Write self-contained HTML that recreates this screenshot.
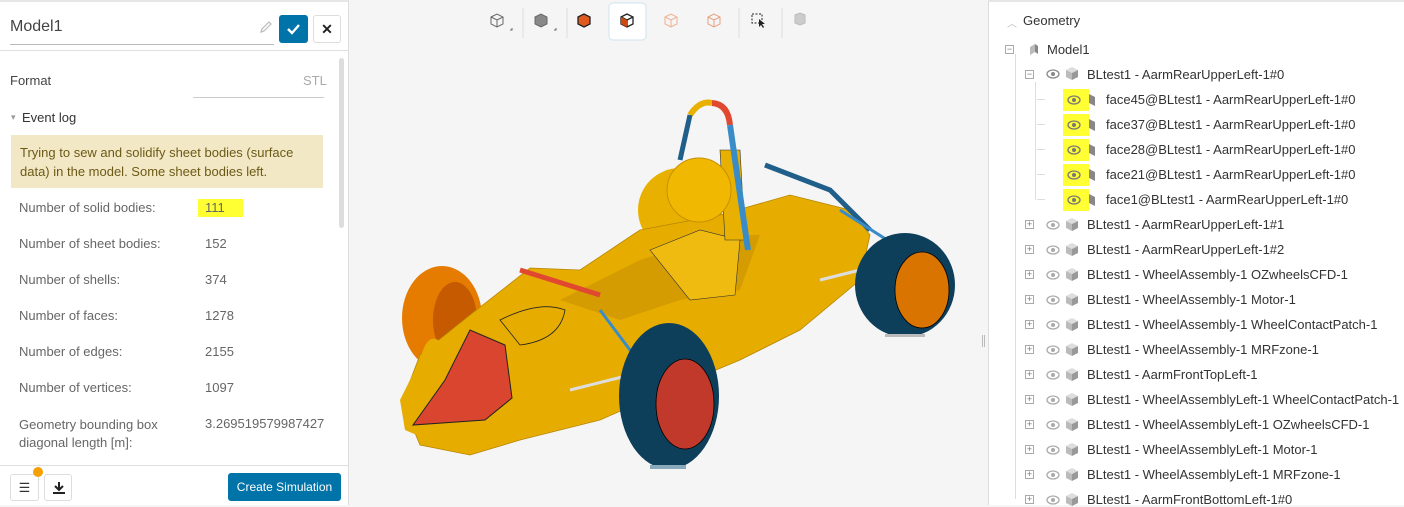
<!DOCTYPE html>
<html><head><meta charset="utf-8"><style>
*{box-sizing:border-box;margin:0;padding:0}
body{width:1404px;height:505px;background:#f5f5f5;font-family:"Liberation Sans",sans-serif;position:relative;overflow:hidden;color:#333}
.a{position:absolute;white-space:nowrap}
#left{position:absolute;left:0;top:0;width:349px;height:505px;background:#fff;border-right:1px solid #ddd;border-top:2px solid #e6e6e6}
.lbl{position:absolute;left:19px;font-size:13px;color:#666}
.val{position:absolute;left:200px;font-size:13px;color:#666}
#right{position:absolute;left:988px;top:0;width:416px;height:505px;background:#fff;border-left:1px solid #ddd;border-top:2px solid #e6e6e6}
.t{position:absolute;font-size:13px;color:#333;white-space:nowrap}
.ex{position:absolute;width:9px;height:9px;border:1px solid #aaa;font-size:9px;line-height:7px;text-align:center;color:#777;background:#fff}
</style></head><body>
<div id="left">
 <div class="a" style="left:10px;top:16px;font-size:16px;color:#444">Model1</div>
 <div class="a" style="left:10px;top:42px;width:264px;border-bottom:1px solid #bbb"></div>
 <svg class="a" style="left:259px;top:18px" width="14" height="14" viewBox="0 0 14 14"><path d="M2 12l1-3 7-7 2 2-7 7z" fill="none" stroke="#bbb" stroke-width="1.2"/></svg>
 <div class="a" style="left:279px;top:13px;width:29px;height:28px;background:#0073a8;border-radius:3px"><svg width="29" height="28"><path d="M9 14l4 4 7-8" fill="none" stroke="#fff" stroke-width="2.4"/></svg></div>
 <div class="a" style="left:313px;top:13px;width:28px;height:28px;border:1px solid #ddd;border-radius:3px;text-align:center;line-height:26px;font-size:14px;font-weight:bold;color:#222">✕</div>
 <div class="a" style="left:0;top:48px;width:348px;border-bottom:1px solid #e0e0e0"></div>
 <div class="a" style="left:339px;top:56px;width:5px;height:170px;background:#ddd;border-radius:3px"></div>
 <div class="a" style="left:10px;top:71px;font-size:13px;color:#444">Format</div>
 <div class="a" style="left:303px;top:71px;font-size:13px;color:#aaa">STL</div>
 <div class="a" style="left:193px;top:95px;width:131px;border-bottom:1px solid #ccc"></div>
 <div class="a" style="left:11px;top:110px;font-size:9px;color:#999">▾</div>
 <div class="a" style="left:22px;top:108px;font-size:13px;color:#333">Event log</div>
 <div class="a" style="left:11px;top:133px;width:312px;height:53px;background:#f3e8c5;padding:8px 9px;font-size:13px;line-height:19px;color:#6b5a17;white-space:normal">Trying to sew and solidify sheet bodies (surface data) in the model. Some sheet bodies left.</div>
 <div class="a" style="left:198px;top:197px;width:45px;height:18px;background:#ffff33"></div>
 <div class="lbl" style="top:198px">Number of solid bodies:</div><div class="val" style="top:198px;left:205px">111</div>
 <div class="lbl" style="top:234px">Number of sheet bodies:</div><div class="val" style="top:234px;left:205px">152</div>
 <div class="lbl" style="top:270px">Number of shells:</div><div class="val" style="top:270px;left:205px">374</div>
 <div class="lbl" style="top:306px">Number of faces:</div><div class="val" style="top:306px;left:205px">1278</div>
 <div class="lbl" style="top:342px">Number of edges:</div><div class="val" style="top:342px;left:205px">2155</div>
 <div class="lbl" style="top:378px">Number of vertices:</div><div class="val" style="top:378px;left:205px">1097</div>
 <div class="lbl" style="top:414px;line-height:18px">Geometry bounding box<br>diagonal length [m]:</div><div class="val" style="top:414px;left:205px">3.269519579987427</div>
 <div class="a" style="left:0;top:463px;width:348px;border-top:1px solid #e0e0e0"></div>
 <div class="a" style="left:10px;top:472px;width:29px;height:27px;border:1px solid #ddd;border-radius:3px;text-align:center;line-height:25px;font-size:13px">☰</div>
 <div class="a" style="left:33px;top:465px;width:10px;height:10px;border-radius:50%;background:#f5a000"></div>
 <div class="a" style="left:44px;top:472px;width:28px;height:27px;border:1px solid #ddd;border-radius:3px"><svg width="28" height="27"><path d="M14 7v8M10 11l4 4 4-4M8 18h12" fill="none" stroke="#222" stroke-width="2"/></svg></div>
 <div class="a" style="left:228px;top:471px;width:113px;height:28px;background:#0073a8;border-radius:3px;color:#fff;font-size:12px;line-height:28px;text-align:center">Create Simulation</div>
</div>

<!-- toolbar -->
<svg class="a" style="left:480px;top:0" width="340" height="45">
 <g stroke="#ddd"><line x1="43" y1="8" x2="43" y2="38"/><line x1="87" y1="8" x2="87" y2="38"/><line x1="259" y1="8" x2="259" y2="38"/><line x1="302" y1="8" x2="302" y2="38"/></g>
 <rect x="129" y="3" width="37" height="37" rx="4" fill="#fff" stroke="#cde3f0"/>
 <g fill="none" stroke="#666"><path d="M11 17l6-3 6 3v7l-6 3-6-3z M11 17l6 3 6-3 M17 20v7"/><path d="M30 30h2v-2"/></g>
 <path d="M55 17l6-3 6 3v7l-6 3-6-3z" fill="#888" stroke="#666"/><path d="M74 30h2v-2" fill="none" stroke="#666"/>
 <path d="M98 17l6-3 6 3v7l-6 3-6-3z" fill="#e05a20" stroke="#222" stroke-width="1.3"/>
 <path d="M141 17l6-3 6 3v7l-6 3-6-3z M141 17l6 3 6-3 M147 20v7" fill="#fff" stroke="#222" stroke-width="1.3"/><path d="M141 17l6 3v7l-6-3z" fill="#d04a10"/>
 <path d="M185 17l6-3 6 3v7l-6 3-6-3z M185 17l6 3 6-3 M191 20v7" fill="none" stroke="#f0b090"/>
 <path d="M228 17l6-3 6 3v7l-6 3-6-3z M228 17l6 3 6-3 M234 20v7" fill="none" stroke="#e8a080"/>
 <rect x="272" y="14" width="10" height="9" fill="none" stroke="#222" stroke-dasharray="2 1.5"/><path d="M279 19l0 8 2-2 2 3 1-1-2-3 3 0z" fill="#222"/>
 <path d="M315 15l5-2 5 2v8l-5 2-5-2z" fill="#ccc" stroke="#bbb"/>
</svg>

<!-- car -->
<svg class="a" style="left:380px;top:90px" width="600" height="390" viewBox="380 90 600 390">
 <ellipse cx="442" cy="318" rx="40" ry="52" fill="#e57c00"/>
 <ellipse cx="455" cy="320" rx="22" ry="38" fill="#c55a00"/>
 <circle cx="680" cy="210" r="42" fill="#e8b000"/>
 <path d="M402 402 L420 355 L470 315 L530 268 L580 270 L640 230 L720 215 L790 195 L850 210 L870 235 L860 280 L800 330 L740 360 L680 385 L600 420 L520 440 L470 455 L420 445 Z" fill="#e6ad00" stroke="#b88600" stroke-width="0.8"/>
 <path d="M560 300 L640 260 L720 235 L760 235 L740 290 L680 300 L620 320 Z" fill="#d49c00"/>
 <path d="M650 250 L700 230 L740 240 L735 295 L690 300 Z" fill="#f0bb10" stroke="#333" stroke-width="0.6"/>
 <path d="M720 150 L740 150 L745 240 L725 240 Z" fill="#e8b000" stroke="#333" stroke-width="0.6"/>
 <circle cx="699" cy="190" r="32" fill="#f0b800" stroke="#c89000"/>
 <path d="M690 115 Q700 100 712 103" fill="none" stroke="#e8b000" stroke-width="6"/>
 <path d="M712 103 Q728 104 730 125" fill="none" stroke="#e04830" stroke-width="6"/>
 <path d="M690 115 L680 160" stroke="#1f5f8a" stroke-width="5"/>
 <path d="M730 125 L748 250" stroke="#3a8cc8" stroke-width="6"/>
 <path d="M765 165 L830 190 L870 230" fill="none" stroke="#1f5f8a" stroke-width="5"/>
 <path d="M520 270 L600 295" stroke="#e04830" stroke-width="5"/>
 <path d="M600 310 L645 370" stroke="#3a8cc8" stroke-width="3"/>
 <path d="M840 210 L895 245" stroke="#3a8cc8" stroke-width="3"/>
 <path d="M570 390 L630 375" stroke="#ddd" stroke-width="3"/>
 <path d="M820 280 L860 270" stroke="#ddd" stroke-width="3"/>
 <path d="M475 405 L450 355 Q430 320 420 360 L400 400 L405 430 L440 445 L480 445 Z" fill="#e6ad00"/>
 <path d="M413 425 L445 380 L470 330 L505 345 L512 398 L485 420 Z" fill="#da4530" stroke="#222" stroke-width="1"/>
 <path d="M500 320 Q540 300 565 310 Q560 340 520 345 Z" fill="none" stroke="#222" stroke-width="0.8"/>
 <ellipse cx="669" cy="396" rx="50" ry="73" fill="#0d3e5a"/>
 <ellipse cx="685" cy="404" rx="29" ry="45" fill="#c0392b" stroke="#000" stroke-width="0.8"/>
 <rect x="650" y="465" width="36" height="4" fill="#8ab"/>
 <ellipse cx="905" cy="285" rx="50" ry="52" fill="#0d3e5a"/>
 <ellipse cx="922" cy="290" rx="27" ry="38" fill="#d97400" stroke="#000" stroke-width="0.8"/>
 <rect x="885" y="334" width="40" height="3" fill="#bbb"/>
</svg>

<div class="a" style="left:982px;top:335px;width:3px;height:12px;border-left:1px solid #bbb;border-right:1px solid #bbb"></div>

<div id="right">
 <div class="a" style="left:18px;top:13px;font-size:10px;color:#bbb">︿</div>
 <div class="t" style="left:34px;top:11px;font-size:13px">Geometry</div>
 <div class="a" style="left:26px;top:52px;height:445px;border-left:1px solid #ddd"></div>
 <div class="a" style="left:46px;top:80px;height:118px;border-left:1px solid #ddd"></div>
 <div class="ex" style="left:16px;top:43px">−</div>
 <svg class="a" style="left:38px;top:40px" width="14" height="14"><path d="M3 5l5-3v8l-5 3z" fill="#bbb"/><path d="M8 2l3 2v8l-3-2z" fill="#888"/></svg>
 <div class="t" style="left:58px;top:40px">Model1</div>
 <div class="ex" style="left:36px;top:68px">−</div>
 <svg class="a" style="left:57px;top:66px" width="14" height="12"><ellipse cx="7" cy="6" rx="6" ry="4" fill="none" stroke="#888" stroke-width="1.3"/><circle cx="7" cy="6" r="2" fill="#888"/></svg>
 <svg class="a" style="left:76px;top:64px" width="14" height="15"><path d="M1 4l6-3 6 3-6 3z" fill="#ddd"/><path d="M1 4l6 3v7l-6-3z" fill="#bbb"/><path d="M13 4l-6 3v7l6-3z" fill="#999"/></svg>
 <div class="t" style="left:98px;top:65px">BLtest1 - AarmRearUpperLeft-1#0</div>
 <div id="faces"></div>
 <div id="rows"></div>
</div>
<script>
var f=["face45","face37","face28","face21","face1"],h="";
f.forEach(function(n,i){var y=98+25*i;
h+='<div class="a" style="left:48px;top:'+(y-1)+'px;width:8px;border-top:1px solid #ddd"></div>';
h+='<div class="a" style="left:74px;top:'+(y-11)+'px;width:26px;height:22px;background:#ffff33"></div>';
h+='<svg class="a" style="left:78px;top:'+(y-6)+'px" width="14" height="12"><ellipse cx="7" cy="6" rx="6" ry="4" fill="none" stroke="#777" stroke-width="1.3"/><circle cx="7" cy="6" r="2" fill="#777"/></svg>';
h+='<svg class="a" style="left:98px;top:'+(y-7)+'px" width="10" height="14"><path d="M2 1l6 3v9l-6-3z" fill="#888"/></svg>';
h+='<div class="t" style="left:117px;top:'+(y-8)+'px">'+n+'@BLtest1 - AarmRearUpperLeft-1#0</div>';});
document.getElementById("faces").outerHTML=h;
var r=["AarmRearUpperLeft-1#1","AarmRearUpperLeft-1#2","WheelAssembly-1 OZwheelsCFD-1","WheelAssembly-1 Motor-1","WheelAssembly-1 WheelContactPatch-1","WheelAssembly-1 MRFzone-1","AarmFrontTopLeft-1","WheelAssemblyLeft-1 WheelContactPatch-1","WheelAssemblyLeft-1 OZwheelsCFD-1","WheelAssemblyLeft-1 Motor-1","WheelAssemblyLeft-1 MRFzone-1","AarmFrontBottomLeft-1#0"];h="";
r.forEach(function(n,i){var y=223+25*i;
h+='<div class="ex" style="left:36px;top:'+(y-5)+'px">+</div>';
h+='<svg class="a" style="left:57px;top:'+(y-6)+'px" width="14" height="12"><ellipse cx="7" cy="6" rx="6" ry="4" fill="none" stroke="#aaa" stroke-width="1.3"/><circle cx="7" cy="6" r="2" fill="#aaa"/></svg>';
h+='<svg class="a" style="left:76px;top:'+(y-8)+'px" width="14" height="15"><path d="M1 4l6-3 6 3-6 3z" fill="#ddd"/><path d="M1 4l6 3v7l-6-3z" fill="#bbb"/><path d="M13 4l-6 3v7l6-3z" fill="#999"/></svg>';
h+='<div class="t" style="left:98px;top:'+(y-8)+'px">BLtest1 - '+n+'</div>';});
document.getElementById("rows").outerHTML=h;
</script>
</body></html>
